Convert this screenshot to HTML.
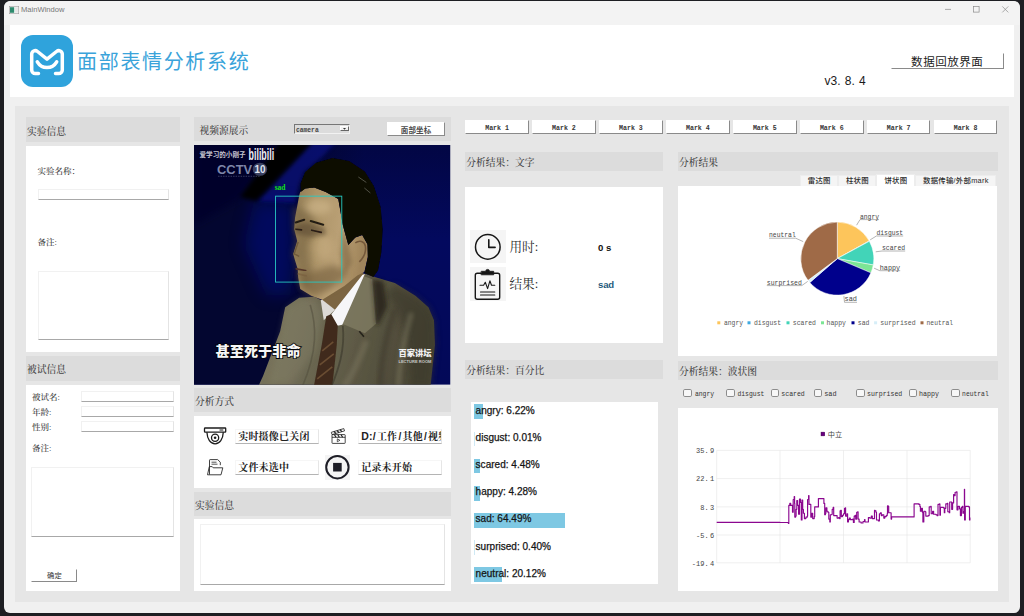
<!DOCTYPE html>
<html lang="zh-CN">
<head>
<meta charset="utf-8">
<title>MainWindow</title>
<style>
*{box-sizing:border-box;margin:0;padding:0}
html,body{width:1024px;height:616px;overflow:hidden;background:#1d1e22}
body{position:relative;font-family:"Liberation Sans","Noto Sans CJK SC",sans-serif;color:#222}
.a{position:absolute}
.win{left:4px;top:1px;width:1015.800px;height:611.800px;background:#f0f0f0;border-radius:6px;overflow:hidden}
.tbar{left:4px;top:1px;width:1015.600px;height:24px;background:#f3f3f3;border-radius:7px 7px 0 0}
.ttl{left:21px;top:5.300px;font-size:7.6px;color:#777;line-height:10px}
.hdr{left:10px;top:24.5px;width:1004px;height:72.5px;background:#fff}
.logo{left:20.500px;top:35px;width:52px;height:52px;border-radius:12px;background:#2fa3dc}
.apptitle{left:77.100px;top:45.500px;font-size:20px;line-height:32px;color:#3aa3da;letter-spacing:1.650px;white-space:nowrap}
.main{left:14.900px;top:106px;width:994.300px;height:495.800px;background:#e6e6e6}
.sh{background:#dcdcdc;font-family:"Liberation Serif","Noto Serif CJK SC",serif;font-size:9.75px;color:#444;white-space:nowrap;font-weight:500}
.sh span{position:absolute;left:1px;top:50%;transform:translateY(-35%);line-height:14px}
.wp{background:#fff}
.lbl{font-family:"Liberation Serif","Noto Serif CJK SC",serif;font-size:8.5px;color:#3a3a3a;line-height:12px;white-space:nowrap;font-weight:500}
.inp{background:#fff;border:1px solid #f1f1f1;border-bottom:1px solid #a8a8a8;border-right-color:#e4e4e4}
.btn{background:#fff;border-right:1px solid #8a8a8a;border-bottom:1px solid #8a8a8a;border-top:1px solid #fff;border-left:1px solid #fff;text-align:center;white-space:nowrap;color:#222}
.mk{top:120px;width:63.5px;height:13.5px;font-family:"Liberation Mono","Noto Sans CJK SC",monospace;font-size:6.6px;font-weight:bold;line-height:12px;color:#333;padding-top:2.4px}
.fld{background:#fff;border:1px solid #f6f6f6;border-bottom:1px solid #b4b4b4;border-right-color:#e6e6e6;font-family:"Liberation Sans","Noto Serif CJK SC",serif;font-weight:700;font-size:10px;line-height:13px;color:#222;white-space:nowrap;overflow:hidden;padding-left:2px;letter-spacing:0.2px}
.pl{font-size:10px;line-height:14px;color:#151515;white-space:pre;letter-spacing:0.02px;-webkit-text-stroke:0.250px #151515}
.big{font-family:"Liberation Serif","Noto Serif CJK SC",serif;font-size:12.6px;line-height:18px;color:#2a2a2a;white-space:nowrap}
.tab{font-size:7.4px;text-align:center;color:#2a2a2a;font-weight:500;overflow:hidden;white-space:nowrap;border:0.5px solid #ededed;border-bottom:none;letter-spacing:0.25px}
.mono text,text.mono{font-family:"Liberation Mono","DejaVu Sans Mono",monospace;font-size:7px}
.cb{width:8.600px;height:8.600px;background:#f7f7f7;border:0.800px solid #8c8c8c;border-radius:1.800px}
</style>
</head>
<body>
<div class="a win"></div>
<div class="a tbar"></div>
  <svg class="a" style="left:8.800px;top:6px" width="10" height="8" viewBox="0 0 10 8"><rect x="0.3" y="0.3" width="9.4" height="7.4" fill="#fdfdfd" stroke="#9a9a9a" stroke-width="0.6"/><rect x="1" y="1.2" width="4.2" height="5.6" fill="#2e8b6e"/><rect x="6" y="1.2" width="3" height="5.6" fill="#e8e8e8"/></svg>
  <div class="a ttl">MainWindow</div>
  <svg class="a" style="left:942.5px;top:4.900px" width="70" height="10" viewBox="0 0 70 10" fill="none" stroke="#8a8a8a" stroke-width="0.7"><path d="M2 4.4h6"/><rect x="30.5" y="1.5" width="5.6" height="5.6"/><path d="M59.3 1.4l6 6M65.3 1.4l-6 6"/></svg>
  <div class="a hdr"></div>
  <div class="a logo"></div>
  <svg class="a" style="left:20.500px;top:35px" width="52" height="52" viewBox="0 0 52 52" fill="none" stroke="#fff" stroke-width="3.500" stroke-linecap="round" stroke-linejoin="round"><path d="M17.5 38.5h-3.2a3.6 3.6 0 0 1-3.6-3.6V19.2c0-3 3.4-4.6 5.8-2.7l9.5 7.6 9.5-7.6c2.400-1.900 5.800-.300 5.800 2.700v15.700a3.600 3.600 0 0 1-3.600 3.600h-3.200"/><path d="M16.300 26.800c2.300 3.900 5.700 5.700 9.700 5.700s7.400-1.800 9.700-5.700"/></svg>
  <div class="a apptitle">面部表情分析系统</div>
  <div class="a" style="left:824.5px;top:72.5px;font-size:12px;line-height:16px;letter-spacing:0.1px;white-space:pre;color:#1a1a1a;word-spacing:0.5px">v3. 8. 4</div>
  <div class="a btn" style="left:891px;top:52.5px;width:112.5px;height:16px;font-size:11.500px;line-height:16px;letter-spacing:0.550px;color:#1a1a1a;padding-left:0">数据回放界面</div>

  <div class="a main"></div>

<!-- LEFT COLUMN -->
<div class="a sh" style="left:26px;top:117px;width:154px;height:25px"><span>实验信息</span></div>
<div class="a wp" style="left:26px;top:145.7px;width:154px;height:206.3px"></div>
<div class="a lbl" style="left:37.5px;top:165px">实验名称：</div>
<div class="a inp" style="left:37.5px;top:188.7px;width:131px;height:11.5px"></div>
<div class="a lbl" style="left:37.5px;top:236px">备注:</div>
<div class="a inp" style="left:37.5px;top:271px;width:131px;height:69.3px"></div>

<div class="a sh" style="left:26px;top:355.5px;width:154px;height:25.5px"><span>被试信息</span></div>
<div class="a wp" style="left:26px;top:385px;width:154px;height:205.7px"></div>
<div class="a lbl" style="left:32px;top:390.7px">被试名:</div>
<div class="a inp" style="left:81px;top:390.5px;width:93px;height:11px"></div>
<div class="a lbl" style="left:32px;top:405.7px">年龄:</div>
<div class="a inp" style="left:81px;top:405.7px;width:93px;height:11.3px"></div>
<div class="a lbl" style="left:32px;top:421px">性别:</div>
<div class="a inp" style="left:81px;top:421px;width:93px;height:11.3px"></div>
<div class="a lbl" style="left:32px;top:441.7px">备注:</div>
<div class="a inp" style="left:31.4px;top:467px;width:143px;height:69.5px"></div>
<div class="a btn" style="left:31.4px;top:568.5px;width:46px;height:13px;font-size:7.3px;line-height:11.5px;color:#333">确定</div>

<!-- MARKS -->
<div class="a btn mk" style="left:465.3px">Mark 1</div>
<div class="a btn mk" style="left:532.2px">Mark 2</div>
<div class="a btn mk" style="left:599.2px">Mark 3</div>
<div class="a btn mk" style="left:666.1px">Mark 4</div>
<div class="a btn mk" style="left:733.0px">Mark 5</div>
<div class="a btn mk" style="left:800.0px">Mark 6</div>
<div class="a btn mk" style="left:866.9px">Mark 7</div>
<div class="a btn mk" style="left:933.8px">Mark 8</div>

<!-- MID -->
<div class="a sh" style="left:194px;top:117px;width:256.5px;height:24.2px"><span style="left:5.5px">视频源展示</span></div>
<div class="a" style="left:293.500px;top:124px;width:56.800px;height:9.500px;background:#dcdcdc;border:1px solid #777;border-right-color:#f2f2f2;border-bottom-color:#f2f2f2;font-family:'Liberation Mono',monospace;font-size:6.300px;line-height:11.500px;color:#444;padding-left:1.500px;font-weight:bold;overflow:hidden">camera</div>
<div class="a" style="left:340.200px;top:126.200px;width:9.200px;height:5.300px;background:#f2f2f2;border:0.700px solid #fff;border-right-color:#666;border-bottom-color:#666"></div>
<svg class="a" style="left:343.300px;top:127.900px" width="3" height="2" viewBox="0 0 3 2"><path d="M0 0h3L1.500 1.800z" fill="#333"/></svg>
<div class="a btn" style="left:386.800px;top:122px;width:58.600px;height:13.800px;font-size:7.500px;line-height:15.500px;font-weight:bold;color:#4a4a4a;letter-spacing:0.200px">面部坐标</div>
<!-- VIDEO -->
<svg class="a" style="left:194px;top:144.800px" width="256.500" height="239.800" viewBox="0 0 256 240" preserveAspectRatio="none">
<defs>
<filter id="b1" x="-20%" y="-20%" width="140%" height="140%"><feGaussianBlur stdDeviation="0.700"/></filter>
<filter id="b2" x="-30%" y="-30%" width="160%" height="160%"><feGaussianBlur stdDeviation="2"/></filter>
<filter id="b3" x="-30%" y="-30%" width="160%" height="160%"><feGaussianBlur stdDeviation="3.500"/></filter>
<filter id="b8" x="-40%" y="-40%" width="180%" height="180%"><feGaussianBlur stdDeviation="8"/></filter>
<linearGradient id="bgR" x1="0" y1="0" x2="0" y2="1"><stop offset="0" stop-color="#020644"/><stop offset="0.400" stop-color="#03095e"/><stop offset="1" stop-color="#030958"/></linearGradient>
<linearGradient id="bgL" x1="0" y1="0" x2="1" y2="0"><stop offset="0" stop-color="#030630" stop-opacity="1"/><stop offset="0.600" stop-color="#030630" stop-opacity="1"/><stop offset="1" stop-color="#030630" stop-opacity="0"/></linearGradient>
<linearGradient id="skin" x1="0" y1="0" x2="1" y2="0.200"><stop offset="0" stop-color="#8c7852"/><stop offset="0.300" stop-color="#ab9367"/><stop offset="0.700" stop-color="#bba176"/><stop offset="1" stop-color="#a0855b"/></linearGradient>
<linearGradient id="suit" x1="0" y1="0" x2="1" y2="0.150"><stop offset="0" stop-color="#7c7860"/><stop offset="0.350" stop-color="#6e6a54"/><stop offset="0.650" stop-color="#5c5844"/><stop offset="1" stop-color="#4a4635"/></linearGradient>
<clipPath id="vc"><rect width="256" height="240"/></clipPath>
</defs>
<g clip-path="url(#vc)">
<rect width="256" height="240" fill="url(#bgR)"/>
<rect width="170" height="240" fill="url(#bgL)"/>
<path d="M60 56L100 58L101 112L96 150L72 150L50 100Z" fill="#06108a" opacity="0.500" filter="url(#b8)"/>
<path d="M0 -4H90L46 54L0 80Z" fill="#02052c" filter="url(#b3)"/>
<path d="M118 -3H142L128 12L110 27L105 40L101 58L64 56Z" fill="#0712a0" opacity="0.500" filter="url(#b2)"/>
<path d="M86 -3H118L62 56L46 52Z" fill="#000106" filter="url(#b2)"/>
<!-- suit -->
<path d="M64 242L69 231L86 186.500L91 162.500L105 153L120 152L128 156L170.500 128.500L182 132.500L200.500 138L221 151L234 162.500L239.500 175.500L240.500 200L236 242Z" fill="url(#suit)" filter="url(#b1)"/>
<path d="M190 150C204 162 214 180 217 242H236L240.500 200L239.500 176L234 163L221 152L200 140Z" fill="#3a3729" opacity="0.600" filter="url(#b3)"/>
<path d="M167.700 130.600L178 134.300L181.700 179L170.500 188.500L148 179Z" fill="#807c62" opacity="0.800" filter="url(#b1)"/>
<path d="M178 134.300L189 136L193 162L183.600 181L181.700 179Z" fill="#221f16" opacity="0.750" filter="url(#b2)"/>
<path d="M200 165C192 190 186 215 186 242" fill="none" stroke="#35322a" stroke-width="5" opacity="0.450" filter="url(#b2)"/>
<path d="M217 168C209 195 205 220 204 242" fill="none" stroke="#8c886e" stroke-width="5" opacity="0.400" filter="url(#b2)"/>
<path d="M172 196C165 215 158 230 150 242" fill="none" stroke="#8c886e" stroke-width="6" opacity="0.350" filter="url(#b2)"/>
<path d="M92 164L106 154L120 153L128 170L122 205L96 240H74L84 200Z" fill="#8f8b71" opacity="0.300" filter="url(#b3)"/>
<!-- neck -->
<path d="M126 150L164 124L171 130L158 150L141 166L128 156Z" fill="#7c6542" filter="url(#b1)"/>
<!-- shirt -->
<path d="M126.500 155.500L129.500 175.500L135 170.500L140.700 165L128 155Z" fill="#dcdad6" filter="url(#b1)"/>
<path d="M140.700 165L168 130L170.500 129L148 180L143 181L136 171Z" fill="#f6f6f8" filter="url(#b1)"/>
<!-- tie -->
<path d="M132 171.500L137 169.500L143.500 181L142.500 200L138 242H119.500L127.500 200Z" fill="#3f2c1c" filter="url(#b1)"/>
<path d="M128 206l11-9M125.500 220l14-11M123 234l15-12" stroke="#80603e" stroke-width="1.600" opacity="0.650"/>
<!-- lapel lines -->
<path d="M165 186.500l4.600 5.500" fill="none" stroke="#25231a" stroke-width="1.600" filter="url(#b1)"/>
<path d="M148.500 181C151 205 144 225 137 242" fill="none" stroke="#3a372b" stroke-width="1.800" opacity="0.600" filter="url(#b1)"/>
<path d="M116 160C122 180 124 205 108 242" fill="none" stroke="#55513f" stroke-width="1.600" opacity="0.600" filter="url(#b1)"/>
<!-- face -->
<path d="M106 47L111 43.500L120 42.500L131.500 47L144 54L148.500 80L154 100L161 92.500L168 90L173.500 100L173.500 112L170 127L163 130.500L150 141L128 155L117 151L106 144L104 132.500L103.500 124L101 116L99 109L103 96L100 84L100.800 73L105 50.500Z" fill="url(#skin)" filter="url(#b1)"/>
<path d="M100 62L116 66L124 82L114 100L118 124L112 146L104 133L103 117L99 109L103 96L100 84Z" fill="#73603f" opacity="0.550" filter="url(#b3)"/>
<path d="M106 130L140 120L154 128L140 142L120 152L108 145Z" fill="#6a5536" opacity="0.550" filter="url(#b3)"/>
<ellipse cx="124" cy="62" rx="13" ry="8" fill="#d6bd92" opacity="0.550" filter="url(#b3)"/>
<ellipse cx="130" cy="102" rx="9" ry="12" fill="#cbb084" opacity="0.500" filter="url(#b3)"/>
<path d="M100.500 80L112 78L130 82L132 90L116 92L101 88Z" fill="#5a4830" opacity="0.550" filter="url(#b2)"/>
<path d="M101.500 77.500l8.500-2.700M116.500 76l12.500 3.800" stroke="#241c12" stroke-width="2" stroke-linecap="round" filter="url(#b1)"/>
<path d="M101.800 84.300l5.500.7M117.500 85.300l9.500 2.200" stroke="#2a1f14" stroke-width="1.700" stroke-linecap="round" filter="url(#b1)"/>
<path d="M104 97L100 109L105 111.500" fill="none" stroke="#6a5435" stroke-width="1.400" opacity="0.800" filter="url(#b1)"/>
<path d="M102 124l9.500 1.600" stroke="#55362a" stroke-width="1.600" stroke-linecap="round" filter="url(#b1)"/>
<path d="M104 129l8 2" stroke="#7a6040" stroke-width="1.600" stroke-linecap="round" opacity="0.700" filter="url(#b1)"/>
<path d="M161 98c4-3 9-2 10 3 1 6-2 12-6 16" fill="none" stroke="#75593a" stroke-width="1.600" filter="url(#b1)"/>
<path d="M149 84L154 100L158 118L150 130L146 110Z" fill="#6e5838" opacity="0.450" filter="url(#b2)"/>
<!-- hair -->
<path d="M106.500 47L106.300 38.500L110.800 27.300L121.800 17.800L138.200 13L154.800 16L170.500 26.500L179.500 41L186.300 62L188.300 84.500L187 107.300L183.700 125.500L179 132L170 128L173.500 112L173 99L167.800 90.200L161 92.500L154 100L148.500 80L144 54L131.500 47L120 42.500L111 43.600Z" fill="#0a0906" filter="url(#b1)"/>
<path d="M164 32l8 5.500M170 43l6 5" stroke="#8a8a80" stroke-width="0.900" opacity="0.600" filter="url(#b1)"/>
<!-- face box -->
<rect x="81.400" y="51.200" width="66.100" height="86" fill="none" stroke="#27c9c2" stroke-width="0.900"/>
<text x="80.500" y="44.800" fill="#12e012" style="font-family:'Liberation Serif',serif;font-size:7.500px;font-weight:bold">sad</text>
<!-- overlays -->
<text x="5.500" y="12" fill="#c6c6d2" textLength="46" lengthAdjust="spacingAndGlyphs" style="font-family:'Liberation Sans','Noto Sans CJK SC',sans-serif;font-size:6.600px;font-weight:bold">爱学习的小刚子</text>
<text x="54.500" y="14.600" fill="#f0f0f6" textLength="25.500" lengthAdjust="spacingAndGlyphs" style="font-family:'Liberation Sans',sans-serif;font-size:16px;font-weight:bold">bilibili</text>
<text x="23" y="29" fill="#7e86a8" textLength="35" lengthAdjust="spacingAndGlyphs" style="font-family:'Liberation Sans',sans-serif;font-size:12.500px;font-weight:bold">CCTV</text>
<path d="M24 31.300H66" stroke="#5a6286" stroke-width="0.600" stroke-dasharray="1.500 1"/>
<ellipse cx="65.800" cy="24.300" rx="7.200" ry="6.600" fill="#3a4060"/>
<text x="60.300" y="28.300" fill="#dfe3f0" textLength="11" lengthAdjust="spacingAndGlyphs" style="font-family:'Liberation Sans',sans-serif;font-size:11px;font-weight:bold">10</text>
<text x="21.500" y="211.500" fill="#f6f6f6" stroke="#05050a" stroke-width="1.600" paint-order="stroke" textLength="85" lengthAdjust="spacingAndGlyphs" style="font-family:'Liberation Sans','Noto Sans CJK SC',sans-serif;font-size:14px;font-weight:900">甚至死于非命</text>
<text x="204" y="211" fill="#f0f0f0" textLength="33" lengthAdjust="spacingAndGlyphs" style="font-family:'Liberation Sans','Noto Sans CJK SC',sans-serif;font-size:8.500px;font-weight:900">百家讲坛</text>
<text x="204" y="217.800" fill="#c8c8c8" textLength="33" lengthAdjust="spacingAndGlyphs" style="font-family:'Liberation Sans',sans-serif;font-size:3.600px;font-weight:bold">LECTURE ROOM</text>
</g>
</svg>
<div class="a sh" style="left:194px;top:388px;width:256.5px;height:24.3px"><span>分析方式</span></div>
<div class="a wp" style="left:194px;top:415.7px;width:256.5px;height:72px"></div>
<!-- camera icon -->
<svg class="a" style="left:203px;top:426px" width="25" height="21" viewBox="0 0 25 21" fill="none" stroke="#1c1c1c" stroke-width="1.300" stroke-linejoin="round"><rect x="1.500" y="2" width="21.200" height="4.100" rx="0.600"/><path d="M3.900 6.300c.3 6.800 3.600 11.500 8.200 11.500s7.900-4.700 8.200-11.500"/><circle cx="12.100" cy="11.700" r="3.600"/><circle cx="12.100" cy="11.700" r="1.300" fill="#1c1c1c" stroke="none"/><path d="M16.500 4h3.800" stroke-width="1"/></svg>
<div class="a fld" style="left:235.2px;top:429px;width:83.5px;height:14.7px">实时摄像已关闭</div>
<!-- clapper icon -->
<svg class="a" style="left:329.700px;top:426.600px" width="17" height="17" viewBox="0 0 17 17" fill="none" stroke="#1c1c1c" stroke-width="0.800" stroke-linejoin="round"><path d="M1.300 5.300 13.800 1.600l.7 2.300L2 7.600z"/><path d="M4 4.500l1.900 1.900M7 3.600l1.900 1.900M10 2.700l1.900 1.900" stroke-width="1.100"/><rect x="2" y="7.600" width="13.200" height="8.800" rx="0.600"/><path d="M2 10.300h13.200"/><path d="M4.500 7.700l1.500 2.500M7.800 7.700l1.500 2.500M11.100 7.700l1.500 2.500" stroke-width="1.100"/><path d="M7.300 11.800v3l2.600-1.500z" stroke-width="0.700"/></svg>
<div class="a fld" style="left:358.2px;top:428.700px;width:84px;height:15px"><b style="font-family:'Liberation Sans',sans-serif;font-size:10.500px;letter-spacing:0.300px">D:/</b><i style="margin-left:0.800px"></i>工作<b style="font-family:'Liberation Sans',sans-serif;margin:0 1.100px">/</b>其他<b style="font-family:'Liberation Sans',sans-serif;margin:0 1.100px">/</b>视频/表情</div>
<!-- folder icon -->
<svg class="a" style="left:205.5px;top:457.5px" width="19" height="18" viewBox="0 0 19 18" fill="none" stroke="#2a2a2a" stroke-width="0.9" stroke-linejoin="round"><path d="M3.500 16.500V2.200a.6.600 0 0 1 .6-.6h7.600l2.600 2.600v3"/><path d="M5.500 4.200h5M5.500 6.200h6" stroke-width="0.800"/><path d="M1.500 16.800 3.300 8.600h2.900l1 1.200h9.600l-1.800 7z"/></svg>
<div class="a fld" style="left:235.2px;top:460px;width:83.5px;height:15px;line-height:14px">文件未选中</div>
<!-- stop icon -->
<div class="a" style="left:325.200px;top:455.200px;width:24.800px;height:24.400px;background:#f4f4f4"></div>
<svg class="a" style="left:325.200px;top:455.200px" width="24.800" height="24.400" viewBox="0 0 24.800 24.400"><circle cx="12.400" cy="12.200" r="11.200" fill="none" stroke="#1d1d26" stroke-width="2"/><rect x="8.100" y="7.900" width="8.600" height="8.600" fill="#1d1d26"/></svg>
<div class="a fld" style="left:358.2px;top:460px;width:84px;height:15px;line-height:14px">记录未开始</div>

<div class="a sh" style="left:194px;top:491.5px;width:256.5px;height:24px"><span>实验信息</span></div>
<div class="a wp" style="left:194px;top:519px;width:256.5px;height:71.700px"></div>
<div class="a inp" style="left:199.800px;top:524.300px;width:245.200px;height:61.200px"></div>

<!-- RIGHT -->
<div class="a sh" style="left:465.2px;top:151.5px;width:198.2px;height:19px"><span>分析结果：文字</span></div>
<div class="a wp" style="left:465.2px;top:187.3px;width:198.2px;height:155.8px"></div>
<div class="a" style="left:470.2px;top:229.7px;width:35.4px;height:33.6px;background:#f5f5f5"></div>
<svg class="a" style="left:470.2px;top:229.7px" width="35.4" height="33.6" viewBox="0 0 35.4 33.6" fill="none" stroke="#161616" stroke-width="1.5" stroke-linecap="round" stroke-linejoin="round"><circle cx="17.800" cy="16.900" r="12.300"/><path d="M18.800 9.800v7.600h6.300" stroke-width="1.600"/></svg>
<div class="a big" style="left:509.5px;top:237.5px">用时:</div>
<div class="a" style="left:598px;top:241.500px;font-size:9.6px;font-weight:bold;line-height:12px;color:#111;white-space:pre">0 s</div>
<div class="a" style="left:470.2px;top:267px;width:35.4px;height:33.700px;background:#f5f5f5"></div>
<svg class="a" style="left:470.2px;top:267px" width="35.4" height="33.700" viewBox="0 0 35.4 33.700" fill="none" stroke="#161616" stroke-width="1.400" stroke-linejoin="round" stroke-linecap="round"><path d="M11.500 6.200H7.300a2 2 0 0 0-2 2v22a2 2 0 0 0 2 2h20.400a2 2 0 0 0 2-2v-22a2 2 0 0 0-2-2h-4.200"/><path d="M11.500 4.300h4.200a1.900 1.900 0 0 1 3.800 0h4.200v3.500H11.500z" fill="#161616" stroke-width="0.800"/><path d="M10 18.300h3.600l1.700-3 2.300 6.300 2.300-7.800 1.600 4.500h3.300" stroke-width="1.100"/><path d="M10.500 25h14.300M10.500 28h14.300" stroke-width="1.100"/></svg>
<div class="a big" style="left:509.5px;top:274.700px">结果:</div>
<div class="a" style="left:598px;top:278.700px;font-size:9.600px;font-weight:bold;line-height:12px;color:#1f5a7c;letter-spacing:-0.2px">sad</div>

<div class="a sh" style="left:465.2px;top:360px;width:198.2px;height:18.600px"><span>分析结果：百分比</span></div>
<div class="a wp" style="left:470.800px;top:401.600px;width:187.200px;height:182.300px"></div>
<div class="a" style="left:473.8px;top:404.3px;width:8.8px;height:14.8px;background:#7ec8e3"></div>
<div class="a pl" style="left:475.6px;top:403.6px">angry: 6.22%</div>
<div class="a" style="left:473.8px;top:431.5px;width:0.8px;height:14.8px;background:#cfe9f4"></div>
<div class="a pl" style="left:475.6px;top:430.8px">disgust: 0.01%</div>
<div class="a" style="left:473.8px;top:458.7px;width:6.3px;height:14.8px;background:#7ec8e3"></div>
<div class="a pl" style="left:475.6px;top:458.0px">scared: 4.48%</div>
<div class="a" style="left:473.8px;top:485.8px;width:6.0px;height:14.8px;background:#7ec8e3"></div>
<div class="a pl" style="left:475.6px;top:485.1px">happy: 4.28%</div>
<div class="a" style="left:473.8px;top:513.0px;width:90.8px;height:14.8px;background:#7ec8e3"></div>
<div class="a pl" style="left:475.6px;top:512.3px">sad: 64.49%</div>
<div class="a" style="left:473.8px;top:540.2px;width:0.8px;height:14.8px;background:#cfe9f4"></div>
<div class="a pl" style="left:475.6px;top:539.5px">surprised: 0.40%</div>
<div class="a" style="left:473.8px;top:567.4px;width:28.3px;height:14.8px;background:#7ec8e3"></div>
<div class="a pl" style="left:475.6px;top:566.7px">neutral: 20.12%</div>


<!-- RIGHT2 -->
<div class="a sh" style="left:678px;top:152px;width:319.700px;height:18.500px"><span>分析结果</span></div>
<div class="a tab" style="left:800.3px;top:175.3px;width:38.0px;height:10.7px;background:#f5f5f5;line-height:10.6px">雷达图</div>
<div class="a tab" style="left:838.3px;top:175.3px;width:38.1px;height:10.7px;background:#f5f5f5;line-height:10.6px">柱状图</div>
<div class="a tab" style="left:876.4px;top:174px;width:39.0px;height:12.0px;background:#fff;line-height:11px">饼状图</div>
<div class="a tab" style="left:915.4px;top:175.3px;width:80.8px;height:10.7px;background:#f5f5f5;line-height:10.6px">数据传输/外部mark</div>

<div class="a wp" style="left:678px;top:185.500px;width:319px;height:170.300px"></div>
<svg class="a" style="left:0;top:0" width="1024" height="616" viewBox="0 0 1024 616">
<g><path d="M837.3 258.6L837.30 222.10A36.5 36.5 0 0 1 869.22 240.90Z" fill="#fdc55b" stroke="#fff" stroke-width="0.5"/>
<path d="M837.3 258.6L869.22 240.90A36.5 36.5 0 0 1 869.41 241.24Z" fill="#3fa9e0" stroke="#fff" stroke-width="0.5"/>
<path d="M837.3 258.6L869.41 241.24A36.5 36.5 0 0 1 873.25 264.94Z" fill="#42d4b8" stroke="#fff" stroke-width="0.5"/>
<path d="M837.3 258.6L873.25 264.94A36.5 36.5 0 0 1 870.90 272.86Z" fill="#7ce595" stroke="#fff" stroke-width="0.5"/>
<path d="M837.3 258.6L870.90 272.86A36.5 36.5 0 0 1 809.75 282.55Z" fill="#00008c" stroke="#fff" stroke-width="0.5"/>
<path d="M837.3 258.6L809.75 282.55A36.5 36.5 0 0 1 808.00 280.36Z" fill="#d6eef8" stroke="#fff" stroke-width="0.5"/>
<path d="M837.3 258.6L808.00 280.36A36.5 36.5 0 0 1 837.30 222.10Z" fill="#9f6a47" stroke="#fff" stroke-width="0.5"/>
</g>
<g fill="none" stroke="#777" stroke-width="0.55"><path d="M856.6 225.2L860 219.6H879" />
<path d="M870.2 239.8L876.4 236H903.2" />
<path d="M875.7 251.8L882 251H905.2" />
<path d="M874.1 268.2L879.8 270.7H900.2" />
<path d="M843.9 296.1L844.5 302.3H857" />
<path d="M807.7 281.4L801.8 285.6H766.8" />
<path d="M803.2 241.6L795.7 238.2H769" />
</g>
<g class="mono" fill="#444"><text x="860" y="218.6" textLength="19.0" lengthAdjust="spacingAndGlyphs">angry</text>
<text x="876.4" y="234.8" textLength="26.8" lengthAdjust="spacingAndGlyphs">disgust</text>
<text x="882" y="249.9" textLength="23.2" lengthAdjust="spacingAndGlyphs">scared</text>
<text x="879.8" y="269.8" textLength="20.4" lengthAdjust="spacingAndGlyphs">happy</text>
<text x="844.5" y="301.2" textLength="12.5" lengthAdjust="spacingAndGlyphs">sad</text>
<text x="766.8" y="284.6" textLength="35.0" lengthAdjust="spacingAndGlyphs">surprised</text>
<text x="769" y="236.8" textLength="26.7" lengthAdjust="spacingAndGlyphs">neutral</text>
</g>
<g class="mono" fill="#555"><rect x="717.3" y="321.3" width="3" height="3" fill="#fdc55b"/><text x="724" y="325.3" textLength="19.0" lengthAdjust="spacingAndGlyphs">angry</text>
<rect x="747.5" y="321.3" width="3" height="3" fill="#3fa9e0"/><text x="754" y="325.3" textLength="27.0" lengthAdjust="spacingAndGlyphs">disgust</text>
<rect x="786.5" y="321.3" width="3" height="3" fill="#42d4b8"/><text x="792.8" y="325.3" textLength="23.2" lengthAdjust="spacingAndGlyphs">scared</text>
<rect x="821.0" y="321.3" width="3" height="3" fill="#7ce595"/><text x="826.6" y="325.3" textLength="19.4" lengthAdjust="spacingAndGlyphs">happy</text>
<rect x="851.5" y="321.3" width="3" height="3" fill="#00008c"/><text x="857.8" y="325.3" textLength="11.6" lengthAdjust="spacingAndGlyphs">sad</text>
<rect x="874.1" y="321.3" width="3" height="3" fill="#d6eef8"/><text x="880.3" y="325.3" textLength="35.3" lengthAdjust="spacingAndGlyphs">surprised</text>
<rect x="920.5" y="321.3" width="3" height="3" fill="#9f6a47"/><text x="926.6" y="325.3" textLength="26.4" lengthAdjust="spacingAndGlyphs">neutral</text>
</g>
</svg>
<div class="a sh" style="left:678px;top:361px;width:319.700px;height:18.500px"><span>分析结果：波状图</span></div>
<div class="a cb" style="left:683.1px;top:388.8px"></div>
<div class="a cb" style="left:726.3px;top:388.8px"></div>
<div class="a cb" style="left:770.9px;top:388.8px"></div>
<div class="a cb" style="left:813.8px;top:388.8px"></div>
<div class="a cb" style="left:856px;top:388.8px"></div>
<div class="a cb" style="left:908.5px;top:388.8px"></div>
<div class="a cb" style="left:951px;top:388.8px"></div>

<div class="a wp" style="left:678px;top:407.700px;width:319.700px;height:182.900px"></div>
<svg class="a" style="left:0;top:0" width="1024" height="616" viewBox="0 0 1024 616">
<g class="mono" fill="#333"><text x="694.9" y="395.9" textLength="19.3" lengthAdjust="spacingAndGlyphs">angry</text>
<text x="737.4" y="395.9" textLength="27.0" lengthAdjust="spacingAndGlyphs">disgust</text>
<text x="781.3" y="395.9" textLength="23.5" lengthAdjust="spacingAndGlyphs">scared</text>
<text x="824.2" y="395.9" textLength="12.4" lengthAdjust="spacingAndGlyphs">sad</text>
<text x="867" y="395.9" textLength="35.3" lengthAdjust="spacingAndGlyphs">surprised</text>
<text x="918.9" y="395.9" textLength="20.0" lengthAdjust="spacingAndGlyphs">happy</text>
<text x="962.1" y="395.9" textLength="26.6" lengthAdjust="spacingAndGlyphs">neutral</text>
</g>
<g fill="none" stroke="#e4e4e4" stroke-width="0.600"><path d="M716.7 450.4V562.8"/><path d="M780 450.4V562.8"/><path d="M843.5 450.4V562.8"/><path d="M907 450.4V562.8"/><path d="M970.2 450.4V562.8"/><path d="M716.7 450.4H970.2"/><path d="M716.7 478.6H970.2"/><path d="M716.7 506.9H970.2"/><path d="M716.7 535H970.2"/><path d="M716.7 562.8H970.2"/></g>
<g class="mono" fill="#444" style="font-size:6.300px"><text x="714.3" y="453.1" text-anchor="end">35<tspan dx="0.2">.</tspan><tspan dx="1.3">9</tspan></text><text x="714.3" y="481.3" text-anchor="end">22<tspan dx="0.2">.</tspan><tspan dx="1.3">1</tspan></text><text x="714.3" y="509.6" text-anchor="end">8<tspan dx="0.2">.</tspan><tspan dx="1.3">3</tspan></text><text x="714.3" y="537.7" text-anchor="end">-5<tspan dx="0.2">.</tspan><tspan dx="1.3">6</tspan></text><text x="714.3" y="565.5" text-anchor="end">-19<tspan dx="0.2">.</tspan><tspan dx="1.3">4</tspan></text></g>
<rect x="821" y="432.100" width="3.800" height="3.800" fill="#6a0080" stroke="#3a0048" stroke-width="0.400"/>
<text x="827.800" y="437" fill="#444" style="font-family:'Liberation Sans','Noto Sans CJK SC',sans-serif;font-size:7.200px">中立</text>
<path d="M716.7 522.4H780.0V522.5H788.3V522.5H788.4V523.5H788.8V505.4H789.8V503.4H790.7V505.4H792.2V505.4H792.5V512.2H793.2V499.5H794.2V496.6H794.6V503.4H794.8V517.1H795.6V516.1H796.1V509.3H796.8V500.5H797.6V505.4H798.6V514.2H799.5V499.0H800.5V502.5H801.3V520.0H802.0V500.0H802.7V509.3H803.4V513.2H804.4V518.6H805.9V517.1H807.3V516.1H807.6V499.5H808.6V495.6H809.0V504.4H810.3V504.4H810.8V517.1H811.7V513.2H812.7V518.6H814.2V516.6H814.7V506.9H818.1V506.9H818.4V498.6H823.5V498.6H823.9V503.4H824.7V514.7H825.4V513.2H825.9V507.8H826.9V511.2H827.9V512.2H828.8V519.1H829.8V522.0H830.3V514.7H831.8V514.2H832.2V509.3H833.2V507.3H833.7V515.6H836.2V515.6H837.1V518.1H838.6V517.6H839.6V518.6H840.1V510.8H840.7V510.3H841.3V516.6H842.5V515.2H843.5V513.7H844.5V508.3H845.4V507.8H845.6V516.1H846.9V513.7H847.6V522.0H848.4V519.6H849.3V518.1H850.3V519.6H852.8V519.1H853.4V522.5H854.2V516.1H855.2V515.2H855.7V519.1H856.7V512.2H857.6V511.7H858.1V519.1H859.1V522.0H861.1V523.0H863.0V521.5H864.5V519.6H865.0V522.0H867.4V522.0H868.4V517.6H869.8V518.1H871.3V516.1H872.3V518.6H874.2V518.6H874.5V510.3H875.0V510.8H876.0V512.2H876.5V520.0H878.4V521.0H879.4V513.7H880.4V512.7H881.3V515.6H882.3V514.7H883.8V518.1H884.8V516.6H886.2V515.6H887.2V513.7H887.5V505.9H888.2V506.4H888.7V512.7H890.6V512.7H891.1V519.1H891.6V516.9H913.6V516.9H914.1V503.9H918.9V504.4H919.9V506.4H920.4V511.2H921.4V508.3H922.4V512.2H922.9V522.0H923.8V511.2H925.3V511.7H925.8V516.1H928.2V515.6H929.2V506.9H930.7V506.4H931.2V513.7H932.6V511.2H933.6V514.2H936.0V514.7H937.0V515.6H938.0V504.4H939.5V503.9H939.9V515.2H940.4V507.3H943.4V507.8H944.3V512.7H944.8V508.3H945.8V503.9H947.3V503.4H947.8V511.7H949.2V512.7H949.7V502.0H951.2V502.0H951.7V509.3H952.6V502.9H953.6V494.6H954.6V495.6H955.1V492.2H956.5V491.7H957.0V509.8H958.0V506.4H959.5V508.8H960.4V515.6H961.4V507.3H962.4V506.4H962.9V513.2H963.9V511.2H964.4V489.3H964.6V520.0H965.3V506.4H968.8V506.9H969.5V520.0H969.9V517.6" fill="none" stroke="#8b078f" stroke-width="1.150" stroke-linejoin="round"/>
</svg>



</body>
</html>
